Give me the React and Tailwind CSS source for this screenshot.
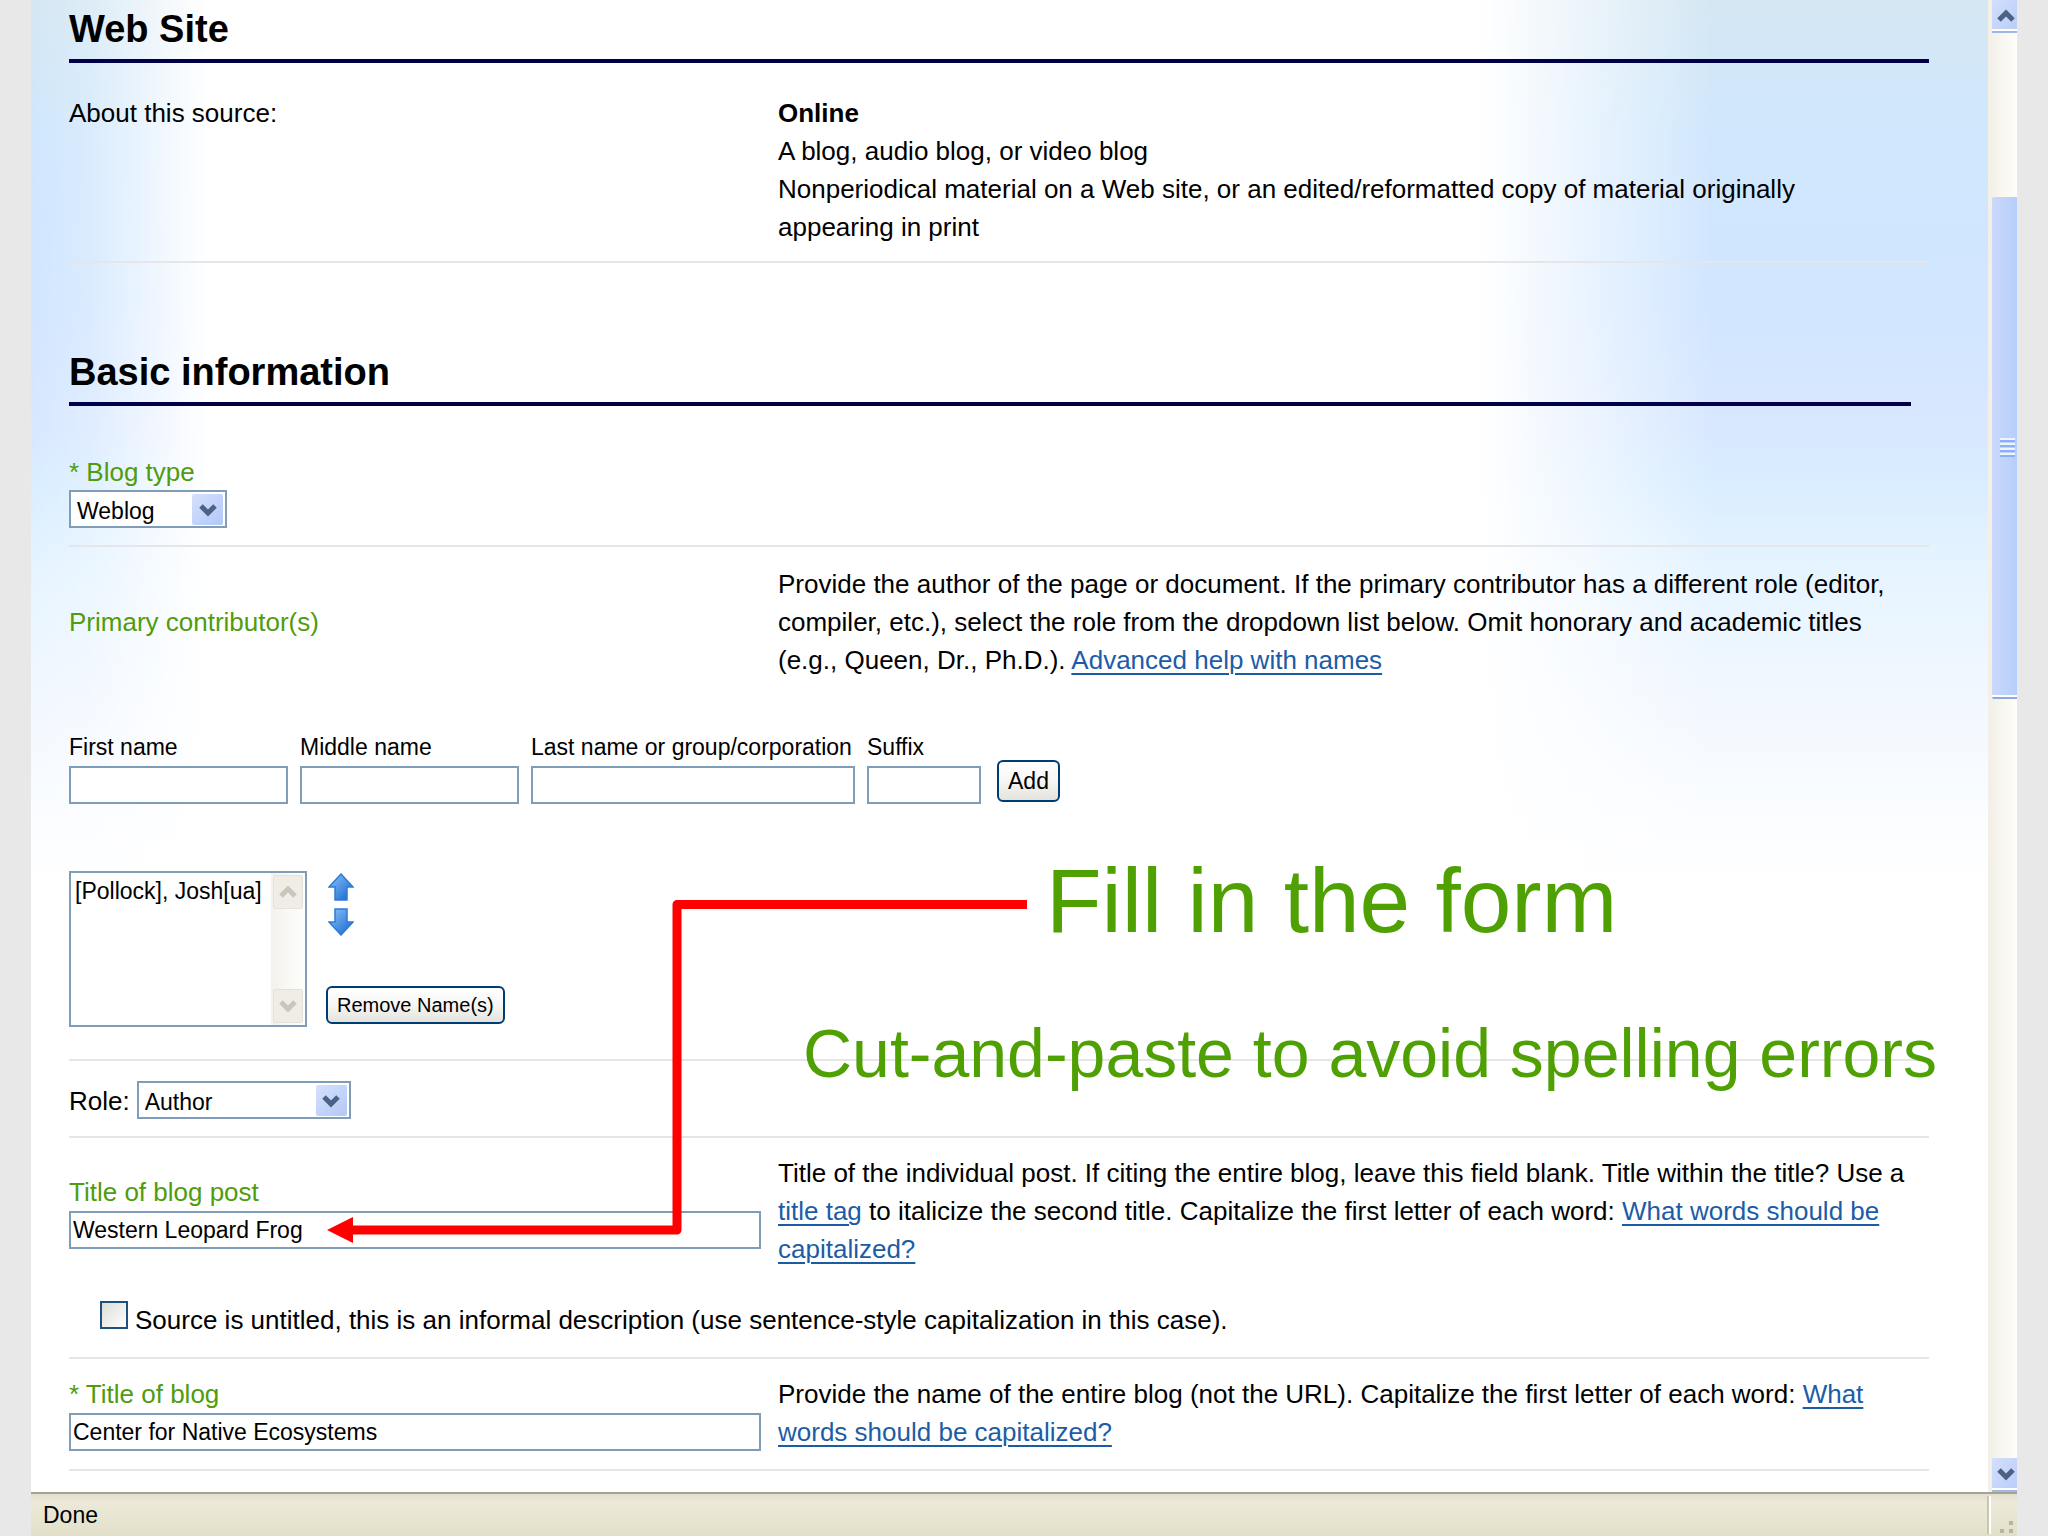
import React, { useState } from "react";

const control =
  "h-[38px] rounded-none border-2 border-[#7f9db9] bg-white text-[23px] text-black outline-none";

const Chevron = ({ up = false, className = "text-[#4d6185]" }) => (
  <svg
    viewBox="0 0 18 14"
    className={`h-[14px] w-[18px] ${className}`}
    aria-hidden="true"
  >
    <path
      d={up ? "M2 11 L9 4 L16 11" : "M2 3 L9 10 L16 3"}
      fill="none"
      stroke="currentColor"
      strokeWidth="5"
    />
  </svg>
);

const MoveArrow = ({ down = false }) => (
  <svg viewBox="0 0 26 28" className="h-7 w-[26px]" aria-hidden="true">
    <defs>
      <linearGradient id={down ? "arrowDown" : "arrowUp"} x1="0" y1="0" x2="1" y2="1">
        <stop offset="0" stopColor="#8cc4f8" />
        <stop offset="1" stopColor="#1263cf" />
      </linearGradient>
    </defs>
    <path
      d={
        down
          ? "M7 1 H19 V14 H25 L13 27 L1 14 H7 Z"
          : "M13 1 L25 14 H19 V27 H7 V14 H1 Z"
      }
      fill={down ? "url(#arrowDown)" : "url(#arrowUp)"}
      stroke="#2f7bd2"
      strokeWidth="1.5"
    />
  </svg>
);

const SectionTitle = ({ children, className = "" }) => (
  <h2
    className={`border-b-4 border-[#00004a] pb-1.5 text-[38px] leading-[48px] font-bold ${className}`}
  >
    {children}
  </h2>
);

const Row = ({ children, className = "" }) => (
  <div className={`border-b-2 border-[#e6e6e8] ${className}`}>{children}</div>
);

const HelpLink = ({ children }) => (
  <a
    href="#help"
    className="text-[#1c5ca6] underline decoration-2 underline-offset-4"
  >
    {children}
  </a>
);

const Dropdown = ({ id, options, className }) => (
  <div className={`relative ${className}`}>
    <select id={id} className={`${control} w-full appearance-none pl-1.5`}>
      {options.map((o) => (
        <option key={o}>{o}</option>
      ))}
    </select>
    <span className="pointer-events-none absolute inset-y-1 right-1 flex w-[31px] items-center justify-center rounded-xs bg-linear-to-br from-[#d5e0fc] to-[#b3c8f8]">
      <Chevron />
    </span>
  </div>
);

const NameField = ({ id, label, className }) => (
  <div className={`flex flex-col gap-[5px] ${className}`}>
    <label htmlFor={id} className="text-[23px] leading-7 whitespace-nowrap">
      {label}
    </label>
    <input id={id} type="text" className={`${control} w-full px-1`} />
  </div>
);

const TitleField = ({ id, label, value, onChange }) => (
  <div className="pr-[17px]">
    <label htmlFor={id} className="block text-[#509c0c]">
      {label}
    </label>
    <input
      id={id}
      type="text"
      value={value}
      onChange={(e) => onChange(e.target.value)}
      className={`${control} block w-full px-0.5`}
    />
  </div>
);

const xpButton =
  "rounded-md border-2 border-[#003c74] bg-linear-to-b from-white via-[#f6f6f4] to-[#e4e3dd] whitespace-nowrap";

const scrollButton =
  "flex items-center justify-center border-b-2 border-[#9fb9e6] bg-linear-to-br from-[#d3dffc] to-[#b9cdf9] pl-0.5 shadow-[inset_0_-2px_0_#fff]";

const ScrollBar = () => (
  <div className="flex w-[29px] shrink-0 flex-col bg-linear-to-r from-[#f1efe6] to-[#fefefa] pl-1">
    <button
      type="button"
      aria-label="Scroll up"
      className={`${scrollButton} h-[33px]`}
    >
      <Chevron up />
    </button>
    <div className="flex-[164]" />
    <div className="flex flex-[501] flex-col items-end justify-center gap-[3px] rounded-l-xs border-b-2 border-[#8ea9dc] bg-linear-to-r from-[#cbd8fb] to-[#b6cefb] pr-0.5 shadow-[inset_0_-2px_0_#fff]">
      {[0, 1, 2, 3].map((i) => (
        <span
          key={i}
          className="h-0.5 w-[15px] bg-[#eef4fe] shadow-[0_2px_0_#8cb0f8]"
        />
      ))}
    </div>
    <div className="flex-[761]" />
    <button
      type="button"
      aria-label="Scroll down"
      className={`${scrollButton} h-[34px]`}
    >
      <Chevron />
    </button>
  </div>
);

const Annotations = () => (
  <div className="pointer-events-none absolute inset-0 text-[#4fa003]">
    <svg
      viewBox="0 0 700 350"
      className="absolute top-[896px] left-[296px] h-[350px] w-[700px]"
      aria-hidden="true"
    >
      <path
        d="M700 8.500 H350 V334 H24"
        fill="none"
        stroke="#ff0000"
        strokeWidth="9"
        strokeLinejoin="round"
      />
      <path d="M0 334 L26 321 V347 Z" fill="#ff0000" />
    </svg>
    <p className="absolute top-[851px] left-[1015px] text-[91px] leading-[100px] whitespace-nowrap">
      Fill in the form
    </p>
    <p className="absolute top-[1015px] left-[772px] text-[68px] leading-[76px] whitespace-nowrap">
      Cut-and-paste to avoid spelling errors
    </p>
  </div>
);

const App = () => {
  const [postTitle, setPostTitle] = useState("Western Leopard Frog");
  const [blogTitle, setBlogTitle] = useState("Center for Native Ecosystems");

  return (
    <div className="flex min-h-screen flex-col bg-[#e8e8e8] px-[31px] font-['Liberation_Sans',Arial,sans-serif] text-[26px] leading-[38px] text-black">
      <div className="flex flex-1">
        <main className="relative flex-1 bg-white bg-[linear-gradient(to_right,rgba(255,255,255,0)_0%,rgba(255,255,255,0.2)_3%,#fff_9%,#fff_74%,rgba(255,255,255,0)_86%),linear-gradient(to_bottom,#d5e7f3_0px,#d0e7fd_130px,#d1e6ff_300px,#d8e8ff_430px,#d9edff_480px,#e6f4ff_570px,#f2f8ff_700px,#fff_880px)] pt-[5px] pr-[59px] pl-[38px]">
          <section>
            <SectionTitle>Web Site</SectionTitle>
            <Row className="grid grid-cols-[709px_1fr] pt-[31px] pb-[15px]">
              <p>About this source:</p>
              <div className="pr-[18px]">
                <p className="font-bold">Online</p>
                <p>A blog, audio blog, or video blog</p>
                <p>
                  Nonperiodical material on a Web site, or an edited/reformatted
                  copy of material originally appearing in print
                </p>
              </div>
            </Row>
          </section>

          <form className="mt-[85px]" onSubmit={(e) => e.preventDefault()}>
            <SectionTitle className="mr-[18px]">Basic information</SectionTitle>

            <Row className="pt-12 pb-4">
              <label htmlFor="blogType" className="block leading-9 text-[#509c0c]">
                * Blog type
              </label>
              <Dropdown
                id="blogType"
                options={["Weblog", "Audio blog", "Video blog"]}
                className="w-[158px]"
              />
            </Row>

            <Row className="pt-[18px] pb-8">
              <div className="grid grid-cols-[709px_1fr] items-center">
                <p className="text-[#509c0c]">Primary contributor(s)</p>
                <p className="pr-[18px]">
                  Provide the author of the page or document. If the primary
                  contributor has a different role (editor, compiler, etc.),
                  select the role from the dropdown list below. Omit honorary
                  and academic titles (e.g., Queen, Dr., Ph.D.).{" "}
                  <HelpLink>Advanced help with names</HelpLink>
                </p>
              </div>

              <div className="mt-[54px] flex items-end gap-3">
                <NameField id="first" label="First name" className="w-[219px]" />
                <NameField id="middle" label="Middle name" className="w-[219px]" />
                <NameField
                  id="last"
                  label="Last name or group/corporation"
                  className="w-[324px]"
                />
                <NameField id="suffix" label="Suffix" className="w-[114px]" />
                <button
                  type="button"
                  className={`${xpButton} mb-0.5 ml-1 h-[42px] px-[9px] text-[23px]`}
                >
                  Add
                </button>
              </div>

              <div className="mt-[67px] flex gap-[19px]">
                <div className="relative h-[156px] w-[238px]">
                  <select
                    multiple
                    size={4}
                    aria-label="Contributors"
                    className="h-full w-full appearance-none overflow-hidden rounded-none border-2 border-[#7f9db9] bg-white text-[23px] outline-none"
                  >
                    <option className="px-1 pt-[5px]">[Pollock], Josh[ua]</option>
                  </select>
                  <div className="pointer-events-none absolute inset-y-0.5 right-0.5 flex w-[34px] flex-col justify-between bg-linear-to-r from-[#f3f2ec] to-[#fefefd] p-0.5">
                    <span className="flex h-[34px] items-center justify-center rounded-xs border border-[#e4e2d8] bg-[#efede6]">
                      <Chevron up className="text-[#c9c7ba]" />
                    </span>
                    <span className="flex h-[34px] items-center justify-center rounded-xs border border-[#e4e2d8] bg-[#efede6]">
                      <Chevron className="text-[#c9c7ba]" />
                    </span>
                  </div>
                </div>
                <div className="flex flex-col items-start justify-between pt-0.5 pb-[3px]">
                  <div className="flex flex-col gap-[7px] pl-0.5">
                    <button type="button" aria-label="Move up">
                      <MoveArrow />
                    </button>
                    <button type="button" aria-label="Move down">
                      <MoveArrow down />
                    </button>
                  </div>
                  <button
                    type="button"
                    className={`${xpButton} h-[38px] px-[9px] text-[20px] leading-8`}
                  >
                    Remove Name(s)
                  </button>
                </div>
              </div>
            </Row>

            <Row className="flex items-center gap-[7px] pt-5 pb-4">
              <label htmlFor="role">Role:</label>
              <Dropdown
                id="role"
                options={["Author", "Editor", "Compiler"]}
                className="w-[214px]"
              />
            </Row>

            <Row className="pt-4 pb-[18px]">
              <div className="grid grid-cols-[709px_1fr] items-center">
                <TitleField
                  id="postTitle"
                  label="Title of blog post"
                  value={postTitle}
                  onChange={setPostTitle}
                />
                <p>
                  Title of the individual post. If citing the entire blog, leave
                  this field blank. Title within the title? Use a{" "}
                  <HelpLink>title tag</HelpLink> to italicize the second title.
                  Capitalize the first letter of each word:{" "}
                  <HelpLink>What words should be capitalized?</HelpLink>
                </p>
              </div>
              <div className="mt-[33px] flex items-start gap-[7px] pl-[31px]">
                <input
                  id="untitled"
                  type="checkbox"
                  className="size-7 appearance-none border-2 border-[#1c5180] bg-linear-to-br from-[#dcdcd7] to-white checked:bg-[#21a121]"
                />
                <label htmlFor="untitled">
                  Source is untitled, this is an informal description (use
                  sentence-style capitalization in this case).
                </label>
              </div>
            </Row>

            <Row className="grid grid-cols-[709px_1fr] pt-4 pb-[18px]">
              <TitleField
                id="blogTitle"
                label="* Title of blog"
                value={blogTitle}
                onChange={setBlogTitle}
              />
              <p className="pr-[18px]">
                Provide the name of the entire blog (not the URL). Capitalize
                the first letter of each word:{" "}
                <HelpLink>What words should be capitalized?</HelpLink>
              </p>
            </Row>
          </form>

          <Annotations />
        </main>
        <ScrollBar />
      </div>

      <footer className="flex h-11 border-t-2 border-[#a3a392] bg-linear-to-b from-[#e2dfcf] via-[#ece9d8] via-20% to-[#e2dfc9] text-[23px]">
        <p className="flex-1 pt-0.5 pl-3">Done</p>
        <div className="my-0.5 w-[30px] border-l-2 border-[#c9c6b0] shadow-[inset_2px_0_0_#fff]">
          <svg viewBox="0 0 28 38" className="h-full w-full" aria-hidden="true">
            <path
              d="M20 25h4v4h-4z M11 33h4v4h-4z M20 33h4v4h-4z"
              fill="#b8b4a0"
            />
          </svg>
        </div>
      </footer>
    </div>
  );
};

export default App;
